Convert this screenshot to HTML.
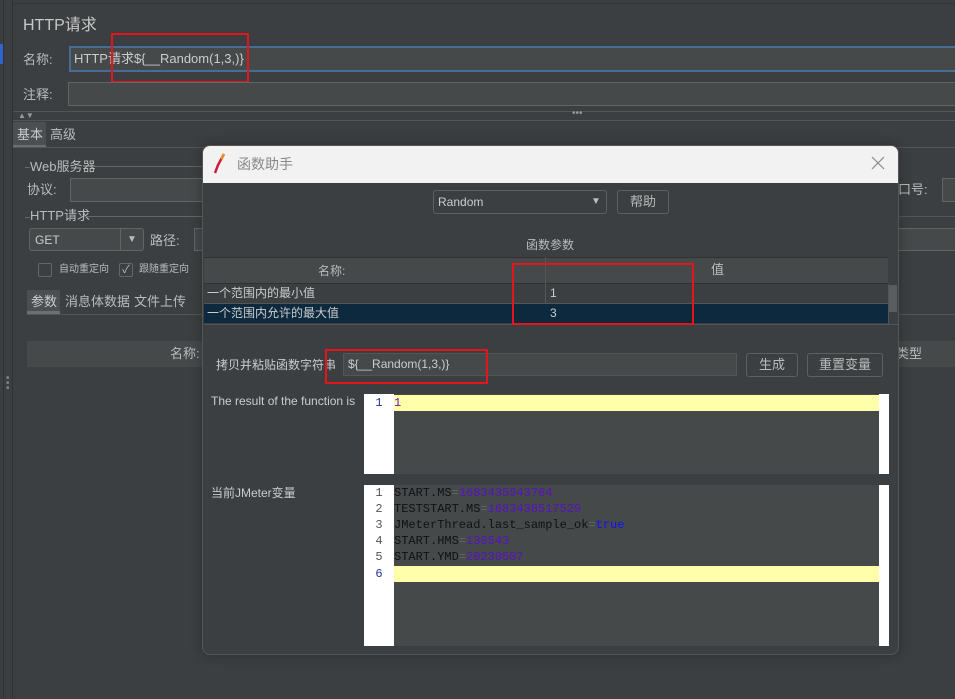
<!DOCTYPE html>
<html><head><meta charset="utf-8"><style>
*{margin:0;padding:0;box-sizing:border-box}
body{width:955px;height:699px;overflow:hidden;background:#3c3f41;font-family:"Liberation Sans","Noto Sans CJK SC",sans-serif;color:#bbbbbb;font-size:12px;line-height:16px;position:relative}
.a{position:absolute;white-space:nowrap}
.inp{position:absolute;background:#45494a;border:1px solid #646464}
.btn{position:absolute;background:#3c3f41;border:1px solid #5e6060;border-radius:3px;text-align:center;color:#bbb;font-size:13px}
.red{position:absolute;border:2px solid #e8141c}
.mono{font-family:"Liberation Mono","DejaVu Sans Mono",monospace;font-size:12px}
.ln{position:absolute;left:0;width:30px;text-align:center;color:#555;font-family:"Liberation Mono",monospace;font-size:12px;line-height:16px}
</style></head><body>
<div class="a" style="left:3px;top:0;width:1px;height:699px;background:#2f3133"></div>
<div class="a" style="left:12px;top:0;width:1px;height:699px;background:#2f3133"></div>
<div class="a" style="left:0;top:44px;width:3px;height:20px;background:#2f65ca"></div>
<div class="a" style="left:13px;top:3px;width:942px;height:1px;background:#333"></div>
<div class="a" style="left:23px;top:16px;font-size:16px;line-height:20px;color:#c8c8c8">HTTP请求</div>
<div class="a" style="left:23px;top:52px;font-size:13px">名称:</div>
<div class="inp" style="left:69px;top:46px;width:890px;height:26px;border:2px solid #466d94"></div>
<div class="a" style="left:74px;top:51px;font-size:13px;color:#ccc">HTTP请求${__Random(1,3,)}</div>
<div class="red" style="left:111px;top:33px;width:138px;height:50px"></div>
<div class="a" style="left:23px;top:87px;font-size:13px">注释:</div>
<div class="inp" style="left:68px;top:82px;width:890px;height:24px"></div>
<div class="a" style="left:13px;top:111px;width:942px;height:1px;background:#555"></div>
<div class="a" style="left:18px;top:108px;font-size:8px;color:#999">▲▼</div>
<div class="a" style="left:572px;top:106px;font-size:10px;color:#999">•••</div>
<div class="a" style="left:13px;top:120px;width:942px;height:1px;background:#555"></div>
<div class="a" style="left:13px;top:122px;width:33px;height:26px;background:#4b4f52;border-bottom:3px solid #6b6f72"></div>
<div class="a" style="left:17px;top:127px;font-size:13px;color:#ccc">基本</div>
<div class="a" style="left:50px;top:127px;font-size:13px">高级</div>
<div class="a" style="left:13px;top:147px;width:942px;height:1px;background:#555"></div>
<div class="a" style="left:25px;top:167px;width:5px;height:1px;background:#666"></div>
<div class="a" style="left:30px;top:159px;font-size:13px">Web服务器</div>
<div class="a" style="left:94px;top:166px;width:110px;height:1px;background:#666"></div>
<div class="a" style="left:27px;top:182px;font-size:13px">协议:</div>
<div class="inp" style="left:70px;top:178px;width:140px;height:24px"></div>
<div class="a" style="left:25px;top:217px;width:5px;height:1px;background:#666"></div>
<div class="a" style="left:30px;top:208px;font-size:13px">HTTP请求</div>
<div class="a" style="left:84px;top:216px;width:120px;height:1px;background:#666"></div>
<div class="inp" style="left:29px;top:228px;width:115px;height:23px;border-radius:3px"></div>
<div class="a" style="left:120px;top:228px;width:1px;height:23px;background:#646464"></div>
<div class="a" style="left:35px;top:232px;font-size:12px;color:#ccc">GET</div>
<div class="a" style="left:127px;top:232px;font-size:10px;color:#bbb">▼</div>
<div class="a" style="left:150px;top:233px;font-size:13px">路径:</div>
<div class="inp" style="left:194px;top:228px;width:12px;height:23px"></div>
<div class="a" style="left:38px;top:263px;width:14px;height:14px;border:1px solid #666;border-radius:2px"></div>
<div class="a" style="left:59px;top:262px;font-size:10px">自动重定向</div>
<div class="a" style="left:119px;top:263px;width:14px;height:14px;border:1px solid #666;border-radius:2px;font-size:11px;line-height:12px;text-align:center">✓</div>
<div class="a" style="left:139px;top:262px;font-size:10px">跟随重定向</div>
<div class="a" style="left:27px;top:290px;width:33px;height:24px;background:#4b4f52;border-bottom:3px solid #6b6f72"></div>
<div class="a" style="left:31px;top:294px;font-size:13px;color:#ccc">参数</div>
<div class="a" style="left:65px;top:294px;font-size:13px">消息体数据</div>
<div class="a" style="left:134px;top:294px;font-size:13px">文件上传</div>
<div class="a" style="left:27px;top:314px;width:180px;height:1px;background:#555"></div>
<div class="a" style="left:27px;top:341px;width:180px;height:26px;background:#45494a"></div>
<div class="a" style="left:170px;top:346px;font-size:13px">名称:</div>
<div class="a" style="left:6px;top:376px;font-size:10px;line-height:5px;color:#888">•<br>•<br>•</div>
<div class="a" style="left:898px;top:182px;font-size:13px">口号:</div>
<div class="inp" style="left:942px;top:178px;width:20px;height:24px"></div>
<div class="a" style="left:898px;top:216px;width:57px;height:1px;background:#555"></div>
<div class="inp" style="left:898px;top:228px;width:60px;height:23px"></div>
<div class="a" style="left:898px;top:314px;width:57px;height:1px;background:#555"></div>
<div class="a" style="left:898px;top:341px;width:57px;height:26px;background:#45494a"></div>
<div class="a" style="left:896px;top:346px;font-size:13px">类型</div>
<div class="a" style="left:202px;top:145px;width:697px;height:510px;border:1px solid #555;border-radius:8px;background:#3c3f41;overflow:hidden;box-shadow:0 0 12px rgba(0,0,0,.3)">
<div class="a" style="left:0;top:0;width:697px;height:37px;background:#f2f2f2"></div>
<svg class="a" style="left:10px;top:6px" width="14" height="24" viewBox="0 0 14 24"><path d="M11 2 L5 13 L2 21" stroke="#c8203c" stroke-width="2.5" fill="none"/><path d="M11 2 L8 7" stroke="#f09020" stroke-width="2.5"/></svg>
<div class="a" style="left:34px;top:9px;font-size:14px;line-height:18px;color:#888">函数助手</div>
<svg class="a" style="left:668px;top:10px" width="14" height="14" viewBox="0 0 14 14"><path d="M1 1L13 13M13 1L1 13" stroke="#888" stroke-width="1.2"/></svg>
<div class="inp" style="left:230px;top:44px;width:174px;height:24px;border-radius:3px;border-color:#5e6060;background:#3c3f41"></div>
<div class="a" style="left:235px;top:48px;font-size:12px;color:#ccc">Random</div>
<div class="a" style="left:388px;top:48px;font-size:10px">▼</div>
<div class="btn" style="left:414px;top:44px;width:52px;height:24px;line-height:22px">帮助</div>
<div class="a" style="left:323px;top:91px;font-size:12px">函数参数</div>
<div class="a" style="left:1px;top:111px;width:684px;height:27px;background:#45494a;border-top:1px solid #2f3133;border-bottom:1px solid #2f3133"></div>
<div class="a" style="left:342px;top:111px;width:1px;height:67px;background:#555"></div>
<div class="a" style="left:115px;top:117px;font-size:12px">名称:</div>
<div class="a" style="left:508px;top:116px;font-size:13px">值</div>
<div class="a" style="left:1px;top:157px;width:684px;height:1px;background:#555"></div>
<div class="a" style="left:4px;top:139px;font-size:12px;color:#ccc">一个范围内的最小值</div>
<div class="a" style="left:347px;top:139px;font-size:12px;color:#ccc">1</div>
<div class="a" style="left:1px;top:158px;width:684px;height:19px;background:#0d293e"></div>
<div class="a" style="left:4px;top:159px;font-size:12px;color:#ccc">一个范围内允许的最大值</div>
<div class="a" style="left:347px;top:159px;font-size:12px;color:#ccc">3</div>
<div class="a" style="left:685px;top:138px;width:10px;height:40px;background:#3c3f41;border-left:1px solid #555"></div>
<div class="a" style="left:686px;top:139px;width:8px;height:27px;background:#5a5d60"></div>
<div class="a" style="left:1px;top:178px;width:695px;height:1px;background:#555"></div>
<div class="a" style="left:13px;top:211px;font-size:12px;color:#ccc">拷贝并粘贴函数字符串</div>
<div class="inp" style="left:140px;top:207px;width:394px;height:23px;border-color:#555"></div>
<div class="a" style="left:145px;top:210px;font-size:12px;color:#ccc">${__Random(1,3,)}</div>
<div class="btn" style="left:543px;top:207px;width:52px;height:24px;line-height:22px">生成</div>
<div class="btn" style="left:604px;top:207px;width:76px;height:24px;line-height:22px">重置变量</div>
<div class="a" style="left:8px;top:247px;font-size:12px;color:#ccc">The result of the function is</div>
<div class="a" style="left:161px;top:248px;width:525px;height:80px;background:#fff">
 <div class="a" style="left:30px;top:0;width:485px;height:80px;background:#45494a"></div>
 <div class="a" style="left:30px;top:1px;width:485px;height:16px;background:#ffffaa"></div>
 <div class="ln" style="top:1px;color:#223399">1</div>
 <div class="a mono" style="left:30px;top:1px;color:#7010c0">1</div>
</div>
<div class="a" style="left:8px;top:339px;font-size:12px;color:#ccc">当前JMeter变量</div>
<div class="a" style="left:161px;top:339px;width:525px;height:161px;background:#fff">
 <div class="a" style="left:30px;top:0;width:485px;height:161px;background:#45494a"></div>
 <div class="a" style="left:30px;top:81px;width:485px;height:16px;background:#ffffaa"></div>
 <div class="ln" style="top:0px">1</div><div class="ln" style="top:16px">2</div><div class="ln" style="top:32px">3</div><div class="ln" style="top:48px">4</div><div class="ln" style="top:64px">5</div><div class="ln" style="top:81px;color:#223399">6</div>
 <div class="a mono" style="left:30px;top:0px;line-height:16px;color:#111">START.MS<span style="color:#666">=</span><span style="color:#5a10c8">1683435943764</span><br>TESTSTART.MS<span style="color:#666">=</span><span style="color:#5a10c8">1683438517529</span><br>JMeterThread.last_sample_ok<span style="color:#666">=</span><span style="color:#1010ff">true</span><br>START.HMS<span style="color:#666">=</span><span style="color:#5a10c8">130543</span><br>START.YMD<span style="color:#666">=</span><span style="color:#5a10c8">20230507</span></div>
</div>
</div>
<div class="red" style="left:512px;top:263px;width:182px;height:62px"></div>
<div class="red" style="left:325px;top:349px;width:163px;height:35px"></div>
</body></html>
